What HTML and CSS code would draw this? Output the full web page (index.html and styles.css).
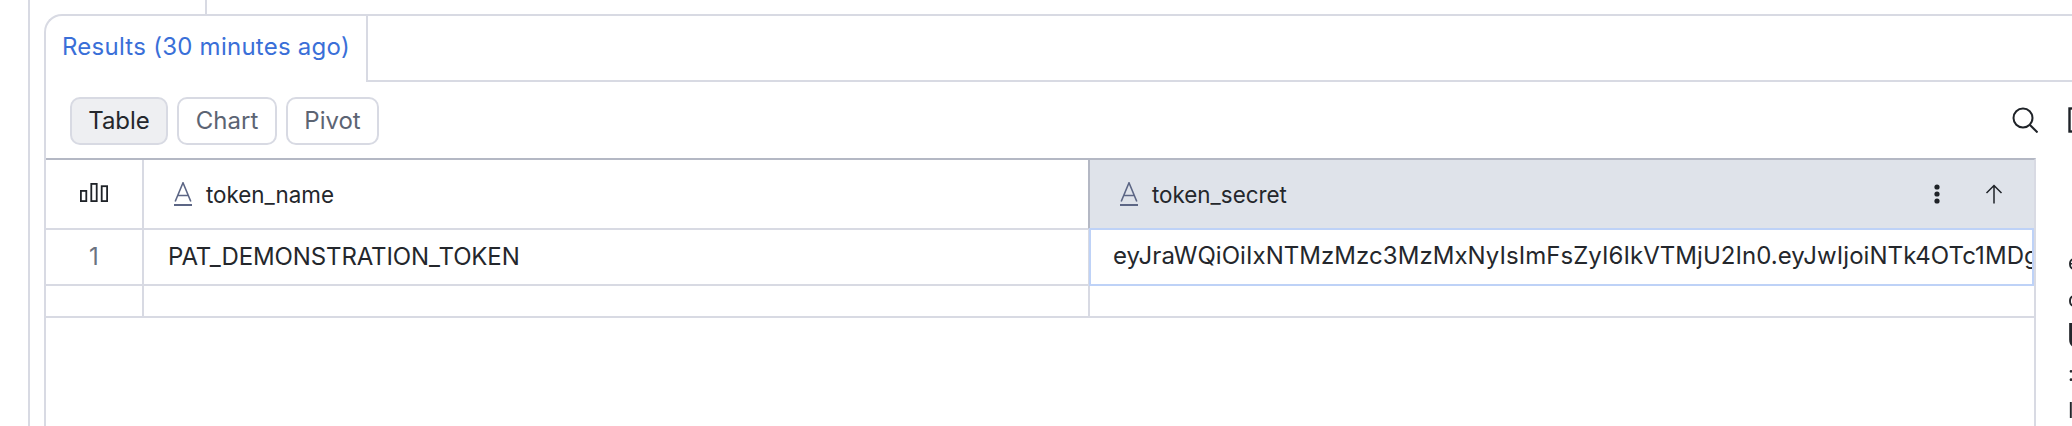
FILE: index.html
```html
<!DOCTYPE html>
<html lang="en">
<head>
<meta charset="utf-8">
<title>Results</title>
<link rel="stylesheet" href="styles.css">
</head>
<body>
<div class="page">
  <div class="rail"></div>
  <main class="main">
    <div class="strip"><span class="strip-divider"></span></div>
    <section class="card">
      <div class="tabs">
        <div class="tab">Results (30 minutes ago)</div>
        <div class="tab-rest"></div>
      </div>
      <div class="toolbar">
        <div class="views">
          <button class="view view-table active">Table</button>
          <button class="view view-chart">Chart</button>
          <button class="view view-pivot">Pivot</button>
        </div>
        <div class="tools">
          <svg class="tool-icon" viewBox="0 0 26 26" fill="none" stroke="#1f2328" stroke-width="2"><circle cx="11" cy="11" r="9.5"/><path d="M18 18l7.5 7.5"/></svg>
          <svg class="tool-icon panel-icon" viewBox="0 0 26 26" fill="none" stroke="#1f2328" stroke-width="2.4"><rect x="1.5" y="1.5" width="23" height="23"/></svg>
        </div>
      </div>
      <div class="content">
        <div class="grid">
          <div class="row head">
            <div class="cell idx">
              <svg class="bars" viewBox="0 0 28 19" fill="none" stroke="#1f2328" stroke-width="1.8"><rect x="0.9" y="7.9" width="5.4" height="10.2"/><rect x="11.3" y="0.9" width="5.4" height="17.2"/><rect x="21.7" y="3.2" width="5.4" height="14.9"/></svg>
            </div>
            <div class="cell col before-sorted">
              <svg class="type" viewBox="0 0 18 24" fill="none" stroke="#5c6685" stroke-width="1.6"><path d="M1.2 19.5L9 .8l7.8 18.7M3.6 13.5h10.8"/><path d="M0 23h18" stroke-width="2"/></svg>
              <span>token_name</span>
            </div>
            <div class="cell col sorted">
              <svg class="type" viewBox="0 0 18 24" fill="none" stroke="#5c6685" stroke-width="1.6"><path d="M1.2 19.5L9 .8l7.8 18.7M3.6 13.5h10.8"/><path d="M0 23h18" stroke-width="2"/></svg>
              <span class="col-name">token_secret</span>
              <svg class="dots" viewBox="0 0 6 20" fill="#1f2328"><circle cx="3" cy="3" r="2.6"/><circle cx="3" cy="10" r="2.6"/><circle cx="3" cy="17" r="2.6"/></svg>
              <svg class="arrow" viewBox="0 0 18 20" fill="none" stroke="#1f2328" stroke-width="1.5"><path d="M9 19.5V1.5M1.5 9L9 1.5 16.5 9"/></svg>
            </div>
          </div>
          <div class="row data">
            <div class="cell idx num">1</div>
            <div class="cell val val-name">PAT_DEMONSTRATION_TOKEN</div>
            <div class="cell val selected">eyJraWQiOiIxNTMzMzc3MzMxNyIsImFsZyI6IkVTMjU2In0.eyJwIjoiNTk4OTc1MDgxMTQ0</div>
          </div>
          <div class="row empty">
            <div class="cell idx"></div>
            <div class="cell"></div>
            <div class="cell"></div>
          </div>
        </div>
        <aside class="side">
          <div>e</div>
          <div>c</div>
          <div class="side-strong">U</div>
          <div>:</div>
          <div>I</div>
        </aside>
      </div>
    </section>
  </main>
</div>
</body>
</html>
```
FILE: styles.css
```css
* { box-sizing: border-box; }
html, body { margin: 0; padding: 0; background: #fff; }
body { font-family: Inter, "Liberation Sans", sans-serif; font-optical-sizing: none; color: #24272c; }
.page { display: flex; width: 2072px; height: 426px; overflow: hidden; }
.rail { flex: 0 0 30px; border-right: 2px solid #d8dae3; }
.main { flex: 0 0 2064px; min-width: 0; padding-left: 14px; display: flex; flex-direction: column; }
.strip { height: 14px; padding-left: 161px; }
.strip-divider { display: block; width: 2px; height: 14px; background: #d8dae3; }
.card { flex: 1; border: 2px solid #d8dae3; border-width: 2px 0 0 2px; border-top-left-radius: 18px; display: flex; flex-direction: column; min-height: 0; }
.tabs { display: flex; height: 66px; }
.tab { flex: 0 0 322px; padding: 16px 0 0 16px; font-size: 24px; letter-spacing: 0.25px; line-height: 30px; color: #3a6fd8; border-right: 2px solid #d8dae3; white-space: nowrap; }
.tab-rest { flex: 1; border-bottom: 2px solid #d8dae3; }
.toolbar { display: flex; justify-content: space-between; align-items: center; height: 76px; padding: 0 0 0 24px; }
.views { display: flex; gap: 9px; margin-top: 1px; }
.view { height: 48px; padding: 0; font: inherit; font-size: 24px; font-optical-sizing: none; color: #5c6473; background: #fff; border: 2px solid #d8dae3; border-radius: 10px; }
.view-table { width: 98px; }
.view-chart { width: 100px; }
.view-pivot { width: 93px; }
.view.active { background: #eeeff2; color: #24272c; }
.tools { display: flex; gap: 30px; }
.tool-icon { width: 26px; height: 26px; display: block; flex: none; }
.content { flex: 1; display: flex; min-height: 0; }
.grid { flex: 0 0 1990px; border-top: 2px solid #b4b8c4; border-right: 2px solid #d8dae3; display: flex; flex-direction: column; }
.row { display: grid; grid-template-columns: 98px 946px 944px; }
.cell { display: flex; align-items: center; border-right: 2px solid #d8dae3; border-bottom: 2px solid #d8dae3; min-width: 0; }
.cell:last-child { border-right: 0; }
.head { height: 70px; }
.data { height: 56px; }
.empty { height: 32px; }
.idx { justify-content: center; }
.num { color: #6b7280; font-size: 24px; padding-bottom: 2px; }
.col { padding-left: 30px; font-size: 22.4px; gap: 14px; }
.before-sorted { border-right-color: #b4b8c4; }
.sorted { background: #dfe3ea; padding-right: 31px; }
.col-name { flex: 1; }
.type { width: 18px; height: 24px; flex: none; }
.bars { width: 28px; height: 19px; margin-bottom: 3px; }
.dots { width: 6px; height: 20px; flex: none; }
.arrow { width: 18px; height: 20px; flex: none; margin-left: 31px; }
.val { padding: 0 0 2px 24px; font-size: 24px; white-space: nowrap; overflow: hidden; }
.val-name { letter-spacing: -0.12px; }
.selected { margin: -2px 0 0 -1px; letter-spacing: 0.05px; outline: 2px solid #bed2f7; outline-offset: -2px; }
.side { flex: 0 0 60px; padding: 86px 0 0 32px; font-size: 21px; line-height: 37px; will-change: transform; }
.side-strong { font-size: 36px; margin-left: -2px; }
```
